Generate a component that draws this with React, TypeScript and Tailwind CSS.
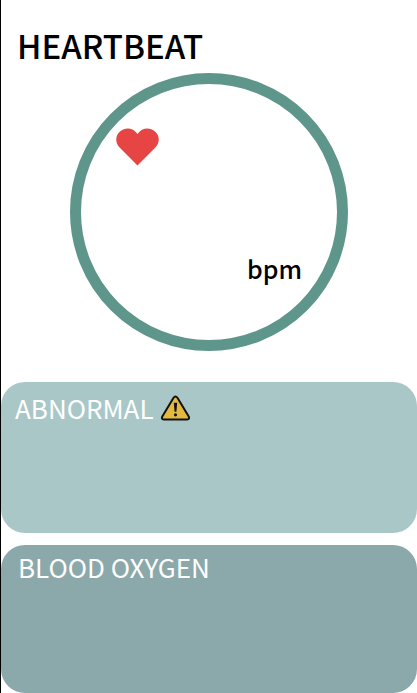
import React from "react";

function Heart() {
  return (
    <svg viewBox="0 0 43 38" className="h-[38px] w-[43px]" role="img" aria-label="Heart">
      <path
        d="M21.5 37.5 3.6 19.6C-.6 15.3-.9 8.6 3 4.4 7.8-.6 16-.8 20.2 4.4L21.5 6 22.8 4.4C27-.8 35.2-.6 40 4.4 43.9 8.6 43.6 15.3 39.4 19.6Z"
        fill="#e64543"
      />
    </svg>
  );
}

function Warning() {
  return (
    <svg viewBox="0 0 31 26" className="h-[26px] w-[31px]" role="img" aria-label="Warning">
      <path
        d="M13.4 3Q15.5.2 17.6 3L28.7 21.4Q30 24.4 27.2 24.5H3.8Q1 24.4 2.3 21.4Z"
        fill="#e4b93f"
        stroke="#111"
        strokeWidth="2"
        strokeLinejoin="round"
      />
      <path d="M13.8 7.8h3.4l-.8 9h-1.8Z" fill="#111" />
      <circle cx="15.5" cy="19.8" r="1.6" fill="#111" />
    </svg>
  );
}

export default function App() {
  return (
    <main className="min-h-screen border-l border-black bg-white font-['Noto_Sans_CJK_SC','Noto_Sans',sans-serif]">
      <h1 className="px-4 pt-[25px] text-[33px] leading-10 font-medium text-black">HEARTBEAT</h1>

      <section
        aria-label="Heart rate"
        className="mx-auto mt-2 flex size-[278px] flex-col justify-between rounded-full border-11 border-[#5f968b] px-[35px] pt-11 pb-14"
      >
        <Heart />
        <p className="text-right text-[25px] leading-8 font-medium text-black">bpm</p>
      </section>

      <div className="mt-[31px] flex flex-col gap-3">
        <section className="h-[151px] rounded-3xl bg-[#aac7c7] px-[14px] pt-[10px]">
          <h2 className="flex items-center gap-[6px] text-[26px] leading-8 text-white">
            ABNORMAL
            <Warning />
          </h2>
        </section>
        <section className="h-[148px] rounded-3xl bg-[#8ba9ab] px-[17px] pt-[6px]">
          <h2 className="text-[26px] leading-8 text-white">BLOOD OXYGEN</h2>
        </section>
      </div>
    </main>
  );
}
